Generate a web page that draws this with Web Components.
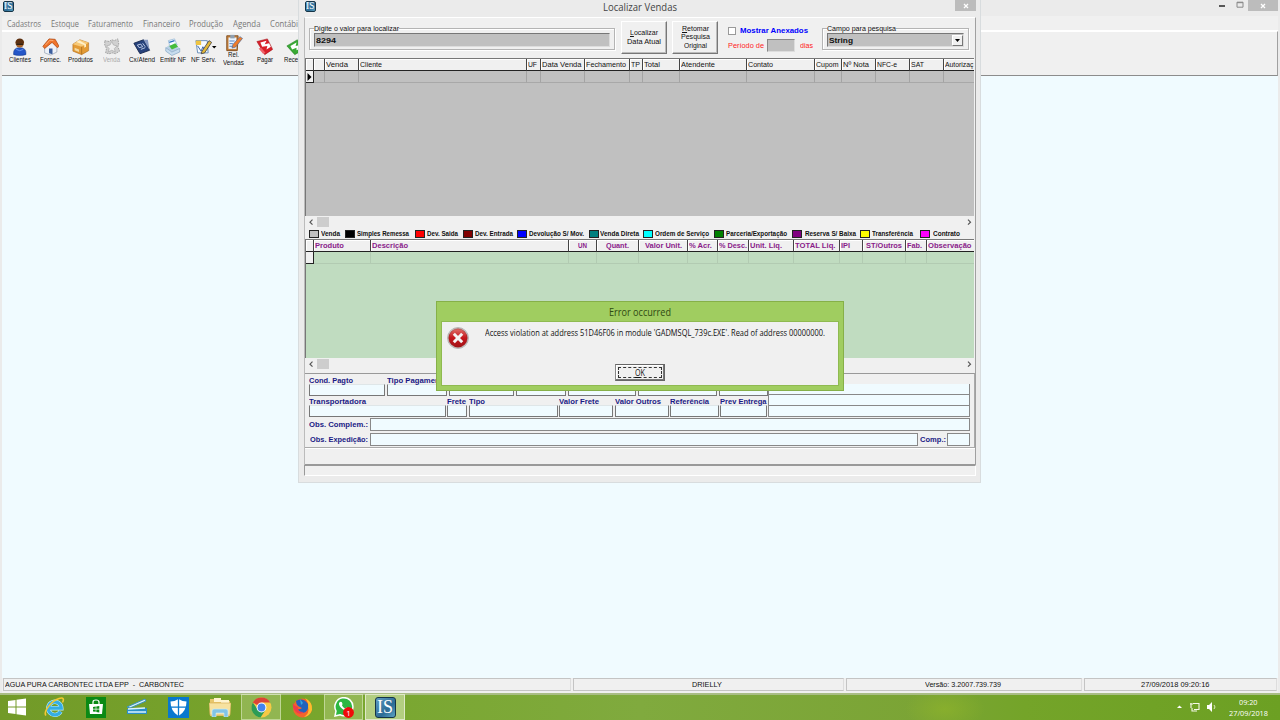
<!DOCTYPE html>
<html lang="pt-BR">
<head>
<meta charset="utf-8">
<title>Localizar Vendas</title>
<style>
html,body{margin:0;width:1280px;height:720px;overflow:hidden;background:#f0fbff}
body{position:relative;font:8px/9px "Liberation Sans",Arial,sans-serif;color:#111;display:flex;flex-direction:column}
</style>
</head>
<body>
<main-window></main-window>
<task-bar></task-bar>
<find-dialog></find-dialog>
<error-dialog></error-dialog>
<script>
function define(name, render) {
  customElements.define(name, class extends HTMLElement {
    constructor() { super(); this.attachShadow({ mode: 'open' }); }
    connectedCallback() {
      if (!this.ready) { this.ready = true; this.shadowRoot.innerHTML = render(this); }
    }
  });
}
const T = (text, w, st = '') => `<fit-text w="${w}" style="${st}">${text}</fit-text>`;

/* application badge */
define('is-icon', el => {
  const s = +el.getAttribute('size');
  return `<style>:host{display:block;flex:none;width:${s}px;height:${s}px}
  div{box-sizing:border-box;width:100%;height:100%;border:${s > 15 ? 1.5 : 1}px solid #153447;border-radius:${s > 15 ? 3 : 2}px;background:linear-gradient(135deg,#5f9dc4,#2d6c96 60%,#5ba3c4);color:#fff;font:${s * .86}px/${s - 2.5}px "Liberation Serif",serif;text-align:center;display:flex;justify-content:center}</style>
  <div>${T('IS', s * .76)}</div>`;
});

/* toolbar pictograms, 20x20 */
const ICONS = {
  client: '<path d="M3 19q-1-8 7-8t7 8q-7 2-14 0z" fill="#2456c8" stroke="#143a8c" stroke-width=".6"/><path d="M6 13q4 3 8 0" stroke="#6c9af2" fill="none"/><circle cx="10" cy="6" r="4.800" fill="#a4622c"/><path d="M5 5q1-4.500 5-4.500t5 4.500l-1 1H6z" fill="#5c3010"/><path d="M6 6h8v2H6z" fill="#33200f"/>',
  home: '<path d="M3 9v8l7 2.500 7-3.500V9l-6-5z" fill="#eef2f8" stroke="#8795a8" stroke-width=".7"/><path d="M8 12h4v6.500l-4-1z" fill="#3c5f9e"/><path d="M1 9.500 8 1l7 .5 4.500 8-2 1.500-6-6-8.500 7z" fill="#f0752c" stroke="#a8420e" stroke-width=".8"/><path d="m4 8 5-5.500 4 .5" stroke="#ffb27c" fill="none"/>',
  box: '<path d="M1 7 9 2l10 3.500v9L11 19 1 15z" fill="#e39b35" stroke="#a8671a" stroke-width=".6"/><path d="M1 7 9 2l10 3.500L11 10z" fill="#f7c978"/><path d="M11 10v9" stroke="#b0721f"/><path d="m5 4.500 9 3.500v3l2-1V7L8 2.500z" fill="#fff0c8"/><path d="m3 11 5 2v3l-5-2z" fill="#f4d9a0"/>',
  gear: '<path d="m2 3 5 1 3-2 3 1 4-2 1 6-1 3 2 5-5 3-3-1-4 1-4-1 1-5-2-4z" fill="#d0d0d0" stroke="#9a9a9a" stroke-dasharray="2 1"/><path d="m10 4 2 4 4 1-3 3 1 4-4-2-4 2 1-4-3-3 4-1z" fill="#eee" stroke="#aaa" stroke-width=".8"/>',
  calc: '<path d="m1 6 11-4 7 12-11 4z" fill="#27427c" stroke="#14264d"/><path d="M12 2h5l2 12z" fill="#899bc4"/><path d="m5 8 4-1 2 3-4 1zm4 5 5-2m-3-5 3 4" stroke="#cdd9f0" fill="none"/>',
  printer: '<path d="M5 3 12 1l3 7-8 3z" fill="#f5fbff" stroke="#79a6cd" stroke-width=".7"/><path d="m2 11 4-3 9 1 3 3-9 4z" fill="#b9d0e6"/><path d="m6 9 7-3 3 4-7 3z" fill="#45bd3c"/><path d="m2 11 7 5 9-4v4l-9 4-7-5z" fill="#c7dcee" stroke="#6a8fb5" stroke-width=".6"/><path d="m6 5 6-2" stroke="#2a6fc0" stroke-width="1.500"/>',
  note: '<path d="M1 3h13l1 14H3z" fill="#f6fbff" stroke="#5a84b4"/><path d="M1 3h6v5H1z" fill="#eec443"/><path d="m3 9 4 6 2-5 2 4" stroke="#2453a0" fill="none"/><path d="m8 15 8-12 3 2-8 12-4 1z" fill="#e3b937" stroke="#3a3a48" stroke-width=".9"/>',
  clip: '<path d="M2 2h13l-1 17H2z" fill="#c4803c" stroke="#7d4a1c"/><path d="M4 4h9v13H4z" fill="#eaf4ff"/><path d="M6 1h5v4H6z" fill="#90a0b0"/><path d="M5 8h6M5 11h4M5 14h5" stroke="#4374b6"/><path d="m9 12 8-9 3 2-8 10-4 1z" fill="#ef7c2a" stroke="#3f66a0" stroke-width=".7"/>',
  pay: '<path d="m1 4 12-3 6 12-9 6z" fill="#d9202a" stroke="#9c0d16" stroke-width=".6"/><path d="m5 5 7-2-2 4 5-1 2 4-5 3 1-4-6 1z" fill="#fff"/><path d="m3 12 5 6 3-1-5-6z" fill="#ef6068"/>',
  receive: '<path d="m1 9 12-7 6 12-9 5z" fill="#39a935" stroke="#1f7a1c" stroke-width=".6"/><path d="m5 9 7-4-1 4 5-1 1 4-5 2v-3l-5 2z" fill="#fff"/>'
};
define('tool-button', el => {
  const [a, b] = el.getAttribute('label').split('|');
  const w = el.getAttribute('w').split(',');
  return `<style>:host{display:flex;flex:none;width:30.600px;height:43px;flex-direction:column;align-items:center;justify-content:flex-start;padding-top:${b ? 2 : 6}px;box-sizing:border-box;line-height:7.500px;font-size:7px;${el.hasAttribute('off') ? 'color:#aaa' : ''}}
  .i{position:relative;display:flex;align-items:center;height:18px;margin-bottom:${b ? -1 : 0}px}svg{flex:none}
  .d{position:absolute;right:-5px;top:8px}</style>
  <div class="i"><svg width="17.500" height="17.500" viewBox="0 0 20 20">${ICONS[el.getAttribute('icon')]}</svg>${el.hasAttribute('drop') ? '<svg class="d" width="5" height="3"><path d="M0 0h4.500L2.200 2.500z"/></svg>' : ''}</div>
  ${T(a, w[0])}${b ? T(b, w[1]) : ''}`;
});

define('main-window', () => `<style>
:host{display:flex;flex-direction:column;width:1280px;height:693px;flex:none;background:#ebebeb;box-sizing:border-box;padding:0 2px}
.title{height:16px;display:flex;align-items:flex-start;justify-content:space-between;padding:1px 0 0 1px;box-sizing:border-box}
.ctl{display:flex;margin-top:-1px}.x{width:30px;height:11px;background:#bcbcbc;display:flex;justify-content:center;align-items:center}
.menu{height:15px;background:#f0f0f0;display:flex;align-items:center;padding:1px 0 0 5px;color:#777;font:8.400px/12px "Open Sans",sans-serif;border-bottom:1px solid #fff;box-sizing:border-box}
.tb{height:45px;box-sizing:border-box;background:#f0f0f0;border-bottom:1px solid #8c8c8c;border-right:1px solid #a0a0a0;border-top:1px solid #fff;padding-left:2.500px;display:flex}
.body{flex:1;background:#f0fbff}
.status{height:15px;background:#f0f0f0;display:grid;grid-template-columns:568px 271px 236px 193px;gap:2px;padding:0 0 0 1px;box-sizing:border-box}
.status div{border:1px solid #c4c4c4;border-right-color:#ddd;display:flex;align-items:center;justify-content:center;height:13px;box-sizing:border-box;padding-right:3px}
.status div:first-child{justify-content:flex-start;padding-left:1px}.status div:last-child{padding-right:10px}
</style>
<div class="title"><is-icon size="11"></is-icon><div class="ctl"><svg width="32" height="12"><path d="M3 6h6" stroke="#333" stroke-width="1.600"/><path d="M21 2.200h6v5h-6z M21 2.700h6" fill="none" stroke="#888"/></svg><div class="x"><svg width="6" height="6"><path d="m1 1 4 4m0-4L1 5" stroke="#fff" stroke-width="1.300"/></svg></div></div></div>
<div class="menu">${[['Cadastros', 34, 10], ['Estoque', 28, 9], ['Faturamento', 45, 9.500], ['Financeiro', 37, 9.500], ['Produção', 34, 9.500], ['Agenda', 27.500, 9.500], ['Contábil', 30, 0]].map(m => T(m[0], m[1], `margin-right:${m[2]}px`)).join('')}</div>
<div class="tb">
<tool-button icon="client" label="Clientes" w="22"></tool-button><tool-button icon="home" label="Fornec." w="21"></tool-button><tool-button icon="box" label="Produtos" w="25"></tool-button><tool-button icon="gear" label="Venda" w="17" off></tool-button><tool-button icon="calc" label="Cx/Atend" w="26"></tool-button><tool-button icon="printer" label="Emitir NF" w="26"></tool-button><tool-button icon="note" label="NF Serv." w="25" drop></tool-button><tool-button icon="clip" label="Rel.|Vendas" w="11,21"></tool-button><tool-button icon="pay" label="Pagar" w="16"></tool-button><tool-button icon="receive" label="Receber" w="23"></tool-button>
</div>
<div class="body"></div>
<div class="status"><div>${T('AGUA PURA CARBONTEC LTDA EPP&nbsp; -&nbsp; CARBONTEC', 179)}</div><div>${T('DRIELLY', 30)}</div><div>${T('Versão: 3.2007.739.739', 76)}</div><div>${T('27/09/2018 09:20:16', 68.500)}</div></div>`);

/* etched frame with a caption over its top line */
define('group-box', el => `<style>:host{display:block;box-sizing:border-box;border:1px solid #b4b4b4;box-shadow:1px 1px 0 #fff,inset 1px 1px 0 #fff;height:22px;padding:0 4px}
.cap{background:#f0f0f0;display:flex;width:max-content;height:7px;line-height:8px;margin:-4px 0 1px;align-items:center}</style>
<div class="cap">${T(el.getAttribute('caption'), el.getAttribute('cw'))}</div><slot></slot>`);

define('push-button', () => `<style>:host{display:flex;flex-direction:column;align-items:center;justify-content:center;box-sizing:border-box;width:46px;height:33px;border:1px solid #fff;border-right-color:#777;border-bottom-color:#777;box-shadow:inset -1px -1px 0 #bbb;line-height:8.600px}</style><slot></slot>`);

define('scroll-bar', () => `<style>:host{display:flex;height:12px;background:#f0f0f0;justify-content:space-between;align-items:center}
.l{display:flex;align-items:center}.t{width:12px;height:10px;background:#cdcdcd;margin-left:4px}</style>
<div class="l"><svg width="8" height="8"><path d="M7.500 1.700 5 4.200l2.500 2.500" fill="none" stroke="#555" stroke-width="1.200"/></svg><div class="t"></div></div>
<svg width="8" height="8"><path d="m1 1.700 2.500 2.500L1 6.700" fill="none" stroke="#555" stroke-width="1.200"/></svg>`);

/* table: columns are label|column width|text width|alignment */
define('data-grid', el => {
  const cols = el.getAttribute('cols').split(';').map(c => c.split('|'));
  const bold = el.hasAttribute('bold');
  return `<style>:host{display:block;overflow:hidden;background:${el.getAttribute('fill')};border-top:1px solid #777;border-left:1px solid #777;box-sizing:border-box;margin-right:1px}
.g{display:grid;grid-template-columns:8px ${cols.map(c => c[1] + 'px').join(' ')};grid-template-rows:12px 12px;width:max-content}
.g>div{box-sizing:border-box}
.h{background:#f0f0f0;border-right:1px solid #444;border-bottom:1px solid #222;box-shadow:inset 1px 1px 0 #fff;display:flex;align-items:center;padding-left:1px;${bold ? 'color:#8a1b8a;font-weight:bold' : ''}}
.c{justify-content:center;padding:0}
.r{border-right:1px solid ${bold ? '#b2cbb2' : '#a4a4a4'};border-bottom:1px solid ${bold ? '#b2cbb2' : '#a8a8a8'}}
.n{background:#f0f0f0;border-right:1px solid #222;border-bottom:1px solid #222;display:flex;align-items:center;justify-content:center}</style>
<div class="g"><div class="h"></div>${cols.map(c => `<div class="h ${c[3] || ''}">${c[0] ? T(c[0], c[2]) : ''}</div>`).join('')}
<div class="n">${bold ? '' : '<svg width="5" height="8"><path d="M.5 0v8l4-4z"/></svg>'}</div>${cols.map(() => '<div class="r"></div>').join('')}</div>`;
});

define('color-key', el => `<style>:host{display:flex;align-items:center;flex:none;height:9px;box-sizing:border-box;width:${el.getAttribute('span')}px;font-weight:bold;font-size:6.500px}
i{width:10px;height:8px;box-sizing:border-box;border:1px solid #222;background:${el.getAttribute('color')};margin-right:${el.getAttribute('gap')}px}</style><i></i>${T(el.getAttribute('label'), el.getAttribute('w'))}`);

/* labelled sunken field */
define('form-field', el => `<style>:host{display:block;flex:none;width:${el.getAttribute('width')}px}
.l{height:9px;display:flex;align-items:center;white-space:nowrap;margin-bottom:-1px}
.b{height:12px;box-sizing:border-box;background:#f0fbff;border:1px solid #777;border-top-color:#dfe6e8}</style>
<div class="l">${el.getAttribute('label') ? T(el.getAttribute('label'), el.getAttribute('w')) : ''}</div><div class="b"></div>`);

const F = (l, w, width) => `<form-field label="${l}" w="${w}" width="${width}"></form-field>`;
const K = (l, color, span, w, gap) => `<color-key label="${l}" color="${color}" span="${span}" w="${w}" gap="${gap}"></color-key>`;

define('find-dialog', () => `<style>
:host{position:absolute;left:298px;top:0;width:683px;height:483px;box-sizing:border-box;background:#ebebeb;border:1px solid #d8dcde;border-top:0;padding:0 4px 0 5px;display:flex;flex-direction:column}
.title{height:17px;display:grid;grid-template-columns:30px 1fr 30px;align-items:start;flex:none}
.title is-icon{margin:1px 0 0 1px}.title .t{display:flex;justify-content:center;font:11.300px/14px "Open Sans",sans-serif;color:#444;padding-right:1px}
.x{width:21px;height:11px;background:#bcbcbc;justify-self:end;display:flex;align-items:center;justify-content:center}
.in{border-top:1px solid #fff;border-right:1px solid #a0a0a0;border-left:1px solid #bbb;background:#f0f0f0;height:448px;box-sizing:border-box;display:flex;flex-direction:column}
.top{height:40px;display:flex;align-items:flex-start;flex:none;padding:0 4px}
.inp{height:14px;box-sizing:border-box;background:#c0c0c0;border:1px solid #777;border-right-color:#ddd;border-bottom-color:#ddd;font-weight:bold;display:flex;align-items:center;padding-left:1px}
.opt{width:104px;padding-top:8px;padding-left:10px;box-sizing:border-box}
.row{display:flex;align-items:center}
.cb{width:8px;height:8px;box-sizing:border-box;background:#fff;border:1px solid #999;margin-right:4px}
.sm{width:28px;height:13px;background:#c0c0c0;border:1px solid #888;border-right-color:#ddd;border-bottom-color:#ddd;box-sizing:border-box;margin:0 5px 0 2.500px}
.dd{margin-left:auto;width:11px;height:11px;background:#f0f0f0;border:1px solid #fff;border-right-color:#777;border-bottom-color:#777;box-sizing:border-box;display:flex;align-items:center;justify-content:center}
.keys{height:11px;display:flex;align-items:center;padding-left:4px;flex:none}
.form{border-top:1px solid #999;border-right:1px solid #aaa;border-bottom:1px solid #aaa;margin-top:3px;height:75px;box-sizing:border-box;padding:2px 4px 0;color:#1a1a85;font-weight:bold;font-size:7.800px;flex:none}
.cols{display:flex;height:41px}.left{width:459px;flex:none}.fr{display:flex;gap:2px;height:21px}
.box{flex:1;margin-top:8px;height:33px;background:#f0fbff;border:1px solid #888;border-top:0;box-sizing:border-box;display:grid;grid-template-rows:11px 11px 1fr}
.box div{border-bottom:1px solid #888;box-sizing:border-box}.box div:last-child{border:0}
.obs{display:flex;align-items:center;height:15px}.obs i{display:block;height:13px;background:#f0fbff;border:1px solid #888;box-sizing:border-box;flex:1}
.pan{height:17px;flex:none;border-bottom:1px solid #999;border-top:1px solid #fff;box-sizing:border-box}
.sb{height:11px;border:1px solid #999;border-right-color:#fff;border-bottom-color:#fff;background:#f0f0f0;box-sizing:border-box}
</style>
<div class="title"><is-icon size="11"></is-icon><div class="t">${T('Localizar Vendas', 74)}</div><div class="x"><svg width="6" height="6"><path d="m1 1 4 4m0-4L1 5" stroke="#fff" stroke-width="1.300"/></svg></div></div>
<div class="in">
<div class="top">
<group-box caption="Digite o valor para localizar" cw="85" style="width:306px;margin-top:10px"><div class="inp">${T('8294', 20)}</div></group-box>
<push-button style="margin:3px 5px 0 6px">${T('<u>L</u>ocalizar', 28)}${T('Data Atual', 34)}</push-button>
<push-button style="margin-top:3px">${T('<u>R</u>etomar', 27)}${T('Pesquisa', 29)}${T('Original', 23)}</push-button>
<div class="opt"><div class="row" style="color:#00f;font-weight:bold"><span class="cb"></span>${T('Mostrar Anexados', 68)}</div><div class="row" style="color:#f22;margin-top:4px">${T('Período de', 36)}<span class="sm"></span>${T('dias', 13)}</div></div>
<group-box caption="Campo para pesquisa" cw="69" style="width:147px;margin-top:10px"><div class="inp">${T('String', 24)}<span class="dd"><svg width="5" height="3"><path d="M0 0h5L2.500 3z"/></svg></span></div></group-box>
</div>
<data-grid style="height:159px" fill="#c0c0c0" cols="|11;Venda|34|22;Cliente|168|22;UF|14|9;Data Venda|44|39.500;Fechamento|45|40;TP|13|9;Total|37|16;Atendente|67|34;Contato|68|25;Cupom|27|22.500;Nº Nota|34|26;NFC-e|34|20;SAT|34|13;Autorizaç|31|28.500"></data-grid>
<scroll-bar></scroll-bar>
<div class="keys">${K('Venda', '#c0c0c0', 36, 19, 2)}${K('Simples Remessa', '#000', 70, 52, 2)}${K('Dev. Saida', '#f00', 48, 31, 2)}${K('Dev. Entrada', '#800000', 54, 38, 2)}${K('Devolução S/ Mov.', '#00f', 72, 55, 2)}${K('Venda Direta', '#008080', 54, 39, 1)}${K('Ordem de Serviço', '#0ff', 71, 54, 2)}${K('Parceria/Exportação', '#008000', 77.500, 61, 2)}${K('Reserva S/ Baixa', '#800080', 68, 51, 3)}${K('Transferência', '#ff0', 60, 41, 2.500)}${K('Contrato', '#f0f', 45, 27, 3)}</div>
<data-grid bold style="height:119px" fill="#c0dcc0" cols="Produto|57|29;Descrição|198|36;UN|28|9|c;Quant.|42|23|c;Valor Unit.|49|37|c;% Acr.|30|23;% Desc.|31|28;Unit. Liq.|45|32;TOTAL Liq.|46|40.500;IPI|23|9;ST/Outros|43|36|c;Fab.|21|15;Observação|48|43.500"></data-grid>
<scroll-bar></scroll-bar>
<div class="form"><div class="cols"><div class="left">
<div class="fr">${F('Cond. Pagto', 44, 76)}${F('Tipo Pagamento', 60, 60)}${F('', 0, 65)}${F('', 0, 50)}${F('', 0, 68)}${F('', 0, 79)}${F('', 0, 49)}</div>
<div class="fr" style="gap:1.400px">${F('Transportadora', 57, 136.500)}${F('Frete', 19, 20.500)}${F('Tipo', 16, 89)}${F('Valor Frete', 40, 54)}${F('Valor Outros', 46, 54)}${F('Referência', 39, 49)}${F('Prev Entrega', 46.500, 47)}</div>
</div><div class="box"><div></div><div></div><div></div></div></div>
<div class="obs">${T('Obs. Complem.:', 59, 'margin-right:2px')}<i></i></div>
<div class="obs">${T('Obs. Expedição:', 58, 'margin:0 2px 0 1px')}<i></i>${T('Comp.:', 26, 'margin:0 1px 0 2px')}<i style="flex:0 0 23px"></i></div></div>
<div class="pan"></div></div>
<div class="sb"></div>`);

define('error-dialog', () => `<style>
:host{position:absolute;left:436px;top:301px;width:408px;height:90px;box-sizing:border-box;background:#a0cd60;border:1px solid #86b048;padding:0 4px 4px;display:flex;flex-direction:column;font:8.400px/12px "Open Sans","Noto Sans",sans-serif}
.t{height:19px;display:flex;align-items:center;justify-content:center;font-size:11px;line-height:14px;color:#2f4a12;padding-top:1px;box-sizing:border-box}
.b{flex:1;background:#f0f0f0;border:1px solid #8fba50;display:flex;flex-direction:column;justify-content:space-between;align-items:center;padding:5px 6px 4px 5px}
.m{display:flex;align-self:stretch;gap:16px}
.ok{width:50px;height:17px;box-sizing:border-box;border:1px solid #666;border-left-color:#888;box-shadow:inset -1px -1px 0 #777,inset 1px 1px 0 #fff;padding:2px;display:flex}
.ok div{flex:1;border:1px dashed #333;display:flex;align-items:center;justify-content:center;line-height:10px}
</style><div class="t">${T('Error occurred', 62)}</div><div class="b"><div class="m">
<svg width="22" height="22" viewBox="0 0 22 22"><defs><linearGradient id="r" x2="0" y2="1"><stop stop-color="#e0706a"/><stop offset=".5" stop-color="#c4161c"/><stop offset="1" stop-color="#a31217"/></linearGradient></defs><circle cx="11" cy="11" r="10.500" fill="#d8d8d8" stroke="#999" stroke-width=".6"/><circle cx="11" cy="11" r="9.300" fill="url(#r)" stroke="#8d1a1a" stroke-width=".5"/><path d="m6.800 6.800 8.400 8.400m0-8.400-8.400 8.400" stroke="#f4f4f4" stroke-width="3"/></svg>
${T("Access violation at address 51D46F06 in module 'GADMSQL_739c.EXE'. Read of address 00000000.", 340)}</div>
<div class="ok"><div>${T('<u>O</u>K', 10)}</div></div></div>`);

define('task-item', () => `<style>:host{display:flex;flex:none;align-items:center;justify-content:center;width:39.300px;margin-right:2px;height:26px;box-sizing:border-box;border:1px solid transparent}
:host([open]){background:rgba(225,235,190,.25);border-color:rgba(235,245,215,.5)}:host([active]){background:rgba(235,245,210,.5);border-color:#dfe8c8}</style><slot></slot>`);

define('task-bar', () => `<style>
:host{display:flex;width:1280px;height:27px;box-sizing:border-box;border-top:2px solid #a9bd85;background:radial-gradient(ellipse 40px 22px at 945px 14px,rgba(150,185,40,.5),transparent),linear-gradient(90deg,#729a28,#78a62d 25%,#80aa3e 50%,#7ba435 72%,#74a429 80%,#6ca023);align-items:center;justify-content:space-between}
.l{display:flex;height:26px;margin-top:-1px}.tray{display:flex;align-items:center;color:#fff;font:8px/11px "Open Sans",sans-serif;margin-top:-2px}
.c{display:flex;flex-direction:column;align-items:center;width:40px;margin:0 12px 0 11px}
</style><div class="l">
<task-item style="width:33px"><svg width="18" height="18" viewBox="0 0 18 18"><path d="M0 3 7.500 2v6.500H0zM8.500 1.800 18 .5v8H8.500zM0 9.500h7.500V16L0 15zM8.500 9.500H18v8l-9.500-1.300z" fill="#fff"/></svg></task-item>
<task-item><svg width="21" height="21" viewBox="0 0 21 21"><path d="M16.500 14.500a6.500 6.500 0 1 1 .8-3.300H5.500" fill="none" stroke="#bfeeff" stroke-width="4.400"/><path d="M16.500 14.500a6.500 6.500 0 1 1 .8-3.300H5.500" fill="none" stroke="#35aee5" stroke-width="3.200"/><path d="M2 18.500C-1 15 7 4 15 1.500c5-1.500 5 1 3.500 4" fill="none" stroke="#f4c830" stroke-width="1.600"/></svg></task-item>
<task-item><svg width="20" height="21" viewBox="0 0 20 21"><path d="M0 0h20v21H0z" fill="#0b8a15"/><path d="M3 7h14l-1 10H4z" fill="#fff"/><path d="M7 8V5q0-2 3-2t3 2v3" fill="none" stroke="#fff" stroke-width="1.200"/><path d="m7 10 2.700-.400v2.200H7zm3.300-.500 3-.5v2.800h-3zM7 12.400h2.700v2.400L7 14.400zm3.300 0h3v3l-3-.5z" fill="#0b8a15"/></svg></task-item>
<task-item><svg width="22" height="18" viewBox="0 0 22 18"><path d="m1 9 18-8 1 2-16 7z" fill="#d5eef7" stroke="#3793bd"/><path d="m1 11 20-1v6H1z" fill="#2b8fc5"/><path d="m2 11 17-1M2 14h18" stroke="#d9f4ff" stroke-width="1.500"/></svg></task-item>
<task-item><svg width="21" height="21" viewBox="0 0 21 21"><path d="M0 0h21v21H0z" fill="#0878cf"/><path d="M10.500 2q4 2.500 8 2.500 0 10-8 14.500-8-4.500-8-14.500 4 0 8-2.500z" fill="#fff"/><path d="M10.500 2v17M2 10.200h17" stroke="#0878cf" stroke-width="1.300"/></svg></task-item>
<task-item><svg width="22" height="20" viewBox="0 0 22 20"><path d="M1 2h8l1 2h11v15H1z" fill="#e8c76c"/><path d="M5 1h7v4H5zM12 3h8v3h-8z" fill="#fff4cf"/><path d="M0 6h22l-1 12H1z" fill="#f7e2a0" stroke="#d4ad50" stroke-width=".6"/><path d="M3 20v-6q0-2 2-2h12q2 0 2 2v6h-4v-4H7v4z" fill="#82c4e6" stroke="#d2f0fa" stroke-width=".6"/></svg></task-item>
<task-item open><svg width="21" height="21" viewBox="0 0 21 21"><circle cx="10.500" cy="10.500" r="10" fill="#f6c945"/><path d="M10.500 10.500 1.800 5.500A10 10 0 0 1 19.200 5.500H10.500z" fill="#db4437"/><path d="M1.800 5.500A10 10 0 0 0 9.500 20.500L14.500 13l-7 .5z" fill="#2b9c56"/><circle cx="10.500" cy="10.500" r="4.900" fill="#fff"/><circle cx="10.500" cy="10.500" r="3.900" fill="#4383ee"/></svg></task-item>
<task-item><svg width="21" height="21" viewBox="0 0 21 21"><circle cx="10.500" cy="11" r="9.500" fill="#f1642c"/><path d="M13 1q8 4 7 12-2 6-8 7 6-4 4-10 1-4-3-9z" fill="#fdbd2d"/><path d="M4 4q7-4 12 3 1 8-5 9-5 0-6-4 3 1 5-1l-4-2q-2-2-2-5z" fill="#2262bd"/><path d="M1 5q0 4 5 5-1 5 6 5-5 4-9-1Q0 10 1 5z" fill="#ef3d4a"/><path d="m8 2 3 4-2 2z" fill="#31a7e4"/></svg></task-item>
<task-item open><svg width="22" height="21" viewBox="0 0 22 21"><path d="M2 19 3 14A9 9 0 1 1 7 17.800z" fill="#2db742" stroke="#fff" stroke-width="1.500"/><path d="M7 5q2-1 2.500 2L9 8.500q1 2 3 3l1.500-1q3 1 2 2-2 2.500-6-.5T6 6z" fill="#fff"/><circle cx="15.500" cy="15.500" r="5.400" fill="#f00a0a"/><text x="13.300" y="18.500" fill="#fff" font-size="8" font-family="Open Sans">1</text></svg></task-item>
<task-item open active><is-icon size="21"></is-icon></task-item>
</div>
<div class="tray"><svg width="36" height="12" viewBox="0 0 36 12"><path d="M0 7h5L2.500 4.500z" fill="#fff"/><path d="M16 2.500h6v6h-5M14 2v5m-1-4h3m-1 4v3h5" fill="none" stroke="#f4f8e8" stroke-width="1.100"/><path d="M30 4h2l3-3v10l-3-3h-2z" fill="#fff"/></svg><svg width="4" height="12"><path d="M1 4q2 2 0 4" fill="none" stroke="#dce9bd"/></svg>
<div class="c">${T('09:20', 18.500)}${T('27/09/2018', 39)}</div></div>`);

/* text condensed or stretched to a given run length */
customElements.define('fit-text', class extends HTMLElement {
  constructor() { super(); this.attachShadow({ mode: 'open' }); }
  connectedCallback() {
    const w = +this.getAttribute('w');
    this.shadowRoot.innerHTML = `<style>:host{display:block;flex:none;width:${w}px;white-space:nowrap}span{display:inline-block;transform-origin:0 50%}</style><span><slot></slot></span>`;
    const s = this.shadowRoot.querySelector('span');
    const n = s.getBoundingClientRect().width;
    if (n) s.style.transform = `scaleX(${w / n})`;
  }
});
</script>
</body>
</html>
